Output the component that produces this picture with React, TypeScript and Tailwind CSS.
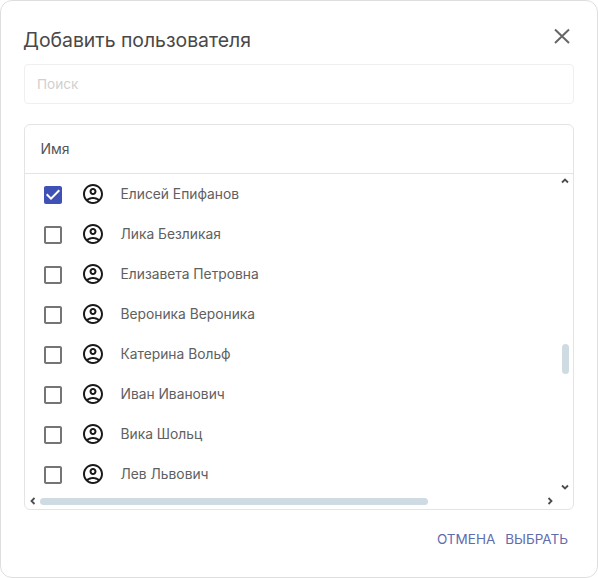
import React from 'react';

const users = [
  'Елисей Епифанов',
  'Лика Безликая',
  'Елизавета Петровна',
  'Вероника Вероника',
  'Катерина Вольф',
  'Иван Иванович',
  'Вика Шольц',
  'Лев Львович',
];

const UserIcon = () => (
  <svg width="24" height="24" viewBox="0 0 24 24" fill="#1a1a1a" className="shrink-0">
    <path d="M12 2C6.48 2 2 6.48 2 12s4.48 10 10 10 10-4.48 10-10S17.52 2 12 2zM7.35 18.5C8.66 17.56 10.26 17 12 17s3.34.56 4.65 1.5C15.34 19.44 13.74 20 12 20s-3.34-.56-4.65-1.5zm10.79-1.38C16.45 15.8 14.32 15 12 15s-4.45.8-6.14 2.12C4.7 15.73 4 13.95 4 12c0-4.42 3.58-8 8-8s8 3.58 8 8c0 1.95-.7 3.73-1.86 5.12z" />
    <path d="M12 6c-1.93 0-3.5 1.57-3.5 3.5S10.07 13 12 13s3.5-1.57 3.5-3.5S13.93 6 12 6zm0 5c-.83 0-1.5-.67-1.5-1.5S11.17 8 12 8s1.5.67 1.5 1.5S12.83 11 12 11z" />
  </svg>
);

const CheckIcon = ({ checked }: { checked: boolean }) => (
  <svg width="24" height="24" viewBox="0 0 24 24" className="shrink-0 mt-[2px]" fill={checked ? '#3f51b5' : '#757575'}>
    {checked ? (
      <path d="M19 3H5c-1.11 0-2 .9-2 2v14c0 1.1.89 2 2 2h14c1.11 0 2-.9 2-2V5c0-1.1-.89-2-2-2zm-9 14l-5-5 1.41-1.41L10 14.17l7.59-7.59L19 8l-9 9z" />
    ) : (
      <path d="M19 5v14H5V5h14m0-2H5c-1.1 0-2 .9-2 2v14c0 1.1.9 2 2 2h14c1.1 0 2-.9 2-2V5c0-1.1-.9-2-2-2z" />
    )}
  </svg>
);

const Arrow = ({ d, className }: { d: string; className: string }) => (
  <svg width="8" height="8" viewBox="0 0 8 8" fill="none" stroke="#4d4d4d" strokeWidth="1.8" className={`absolute ${className}`}>
    <path d={d} />
  </svg>
);

const App = () => {
  return (
    <div className="w-[598px] h-[578px] bg-white font-['Inter',sans-serif]">
      <div className="relative flex flex-col w-full h-full border border-[#dedede] rounded-[12px] px-[23px] bg-white">
        <h2 className="h-[63px] pt-[25px] -ml-[1px] text-[19.4px] leading-[28px] font-normal text-[#484848]">Добавить пользователя</h2>
        <button className="absolute top-[25px] right-[26px]">
          <svg width="20" height="20" viewBox="0 0 20 20" fill="none" stroke="#666666" strokeWidth="2" className="block">
            <path d="M4 3.5 L18 17 M18 3.5 L4 17" />
          </svg>
        </button>

        <div className="flex items-center h-[40px] border border-[#efefef] rounded-[4px] px-[12px] text-[13.6px] text-[#d0d0d0]">
          Поиск
        </div>

        <div className="relative mt-[20px] h-[386px] border border-[#e4e4e4] rounded-[6px] flex flex-col overflow-hidden">
          <div className="flex items-center h-[49px] shrink-0 border-b border-[#e4e4e4] pl-[15.5px] pb-[2px] text-[14px] text-[#555555]">
            Имя
          </div>
          {users.map((name, i) => (
            <div key={name} className="flex items-center h-[40px] shrink-0 pl-[16px]">
              <CheckIcon checked={i === 0} />
              <div className="ml-[16px]">
                <UserIcon />
              </div>
              <span className="ml-[15.5px] mt-[1px] text-[13.8px] text-[#606060]">{name}</span>
            </div>
          ))}

          {/* scrollbars sit on top of the list */}
          <Arrow d="M1 5.5 L4 2.5 L7 5.5" className="top-[52px] right-[4px]" />
          <Arrow d="M1 2.5 L4 5.5 L7 2.5" className="bottom-[18px] right-[4px]" />
          <div className="absolute top-[219px] right-[4px] w-[7px] h-[30px] rounded-full bg-[#cfdbe3]" />
          <Arrow d="M5.5 1 L2.5 4 L5.5 7" className="bottom-[4px] left-[4px]" />
          <Arrow d="M2.5 1 L5.5 4 L2.5 7" className="bottom-[4px] right-[19px]" />
          <div className="absolute bottom-[4px] left-[15px] w-[388px] h-[7px] rounded-full bg-[#cfdbe3]" />
        </div>

        <div className="flex justify-end gap-[10px] pt-[21px] pr-[6px] text-[13.5px] leading-[16px] text-[#5f6cae]">
          <span>ОТМЕНА</span>
          <span>ВЫБРАТЬ</span>
        </div>
      </div>
    </div>
  );
};

export default App;
